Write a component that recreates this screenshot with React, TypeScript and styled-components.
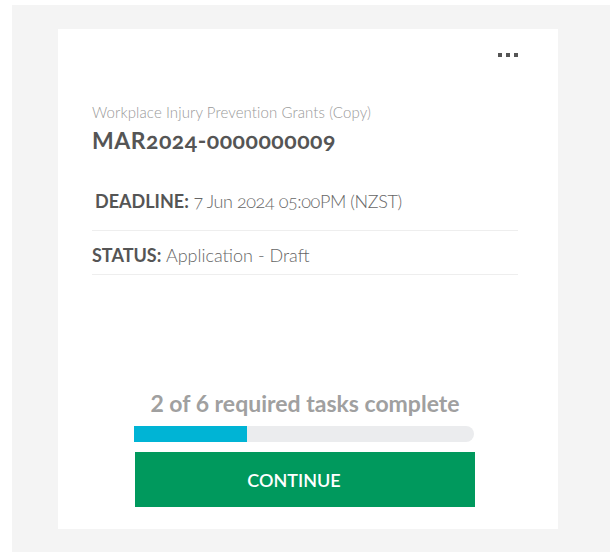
import React from 'react';
import styled, {createGlobalStyle} from 'styled-components';

const GlobalStyle = createGlobalStyle`
  html, body {
    margin: 0;
    padding: 0;
    background: #ffffff;
    font-family: Lato, "Noto Sans", "Liberation Sans", sans-serif;
  }
  * {
    box-sizing: border-box;
  }
`;

const application = {
  programme: 'Workplace Injury Prevention Grants (Copy)',
  reference: 'MAR2024-0000000009',
  deadline: '7 Jun 2024 05:00PM (NZST)',
  status: 'Application - Draft',
  tasksDone: 2,
  tasksTotal: 6,
};

export default function App() {
  const pct = (application.tasksDone / application.tasksTotal) * 100;
  return (
    <>
      <GlobalStyle />
      <Page>
        <Panel>
          <Card>
            <CardHeader>
              <MoreButton aria-label="More options">
                <Dot />
                <Dot />
                <Dot />
              </MoreButton>
            </CardHeader>
            <Programme>{application.programme}</Programme>
            <Reference>{application.reference}</Reference>
            <Details>
              <DetailRow $first>
                <Label>DEADLINE:</Label> <Value $tight>{application.deadline}</Value>
              </DetailRow>
              <DetailRow>
                <Label>STATUS:</Label> <Value>{application.status}</Value>
              </DetailRow>
            </Details>
            <Footer>
              <Progress>
                {application.tasksDone} of {application.tasksTotal} required tasks complete
              </Progress>
              <Track>
                <Fill style={{width: `${pct}%`}} />
              </Track>
              <ContinueButton>CONTINUE</ContinueButton>
            </Footer>
          </Card>
        </Panel>
      </Page>
    </>
  );
}

const Page = styled.div`
  padding: 5px 0 0 12px;
  width: 610px;
  height: 552px;
  overflow: hidden;
`;

const Panel = styled.div`
  background: #f4f4f4;
  padding: 24px 0 30px 46px;
  min-height: 560px;
`;

const Card = styled.div`
  width: 500px;
  height: 500px;
  background: #ffffff;
  padding: 24px 40px 22px 34px;
  display: flex;
  flex-direction: column;
`;

const CardHeader = styled.div`
  display: flex;
  justify-content: flex-end;
`;

const MoreButton = styled.div`
  display: flex;
  gap: 4px;
  cursor: pointer;
`;

const Dot = styled.span`
  width: 4px;
  height: 4px;
  background: #555555;
`;

const Programme = styled.div`
  margin-top: 45px;
  font-size: 15px;
  line-height: 20px;
  font-weight: 300;
  color: #999999;
  letter-spacing: 0.1px;
`;

const Reference = styled.h2`
  margin: 4px 0 0;
  font-size: 23px;
  line-height: 28px;
  font-weight: 700;
  color: #555555;
  letter-spacing: 0.5px;
  font-variant-numeric: oldstyle-nums;
`;

const Details = styled.div`
  margin-top: 25px;
`;

const DetailRow = styled.div<{$first?: boolean}>`
  padding: ${({$first}) => ($first ? '10px 0 17px 3px' : '12px 0 7px')};
  border-bottom: 1px solid #eeeeee;
  font-size: 18px;
  line-height: 24px;
`;

const Label = styled.span`
  font-weight: 700;
  color: #555555;
`;

const Value = styled.span<{$tight?: boolean}>`
  font-weight: 300;
  color: #666666;
  letter-spacing: ${({$tight}) => ($tight ? '-0.4px' : '0')};
  font-variant-numeric: oldstyle-nums;
`;

const Footer = styled.div`
  margin-top: auto;
  display: flex;
  flex-direction: column;
  align-items: center;
`;

const Progress = styled.div`
  font-size: 23px;
  line-height: 26px;
  font-weight: 700;
  color: #a0a0a0;
`;

const Track = styled.div`
  margin: 10px 2px 0 0;
  width: 80%;
  height: 16px;
  background: #ebecee;
  border-radius: 0 8px 8px 0;
  overflow: hidden;
`;

const Fill = styled.div`
  height: 100%;
  background: #00b4d5;
`;

const ContinueButton = styled.button`
  margin-top: 10px;
  width: 80%;
  height: 55px;
  padding: 0 22px 0 0;
  border: none;
  background: #00995d;
  color: #ffffff;
  font-family: inherit;
  font-size: 18px;
  font-weight: 600;
  cursor: pointer;
`;
